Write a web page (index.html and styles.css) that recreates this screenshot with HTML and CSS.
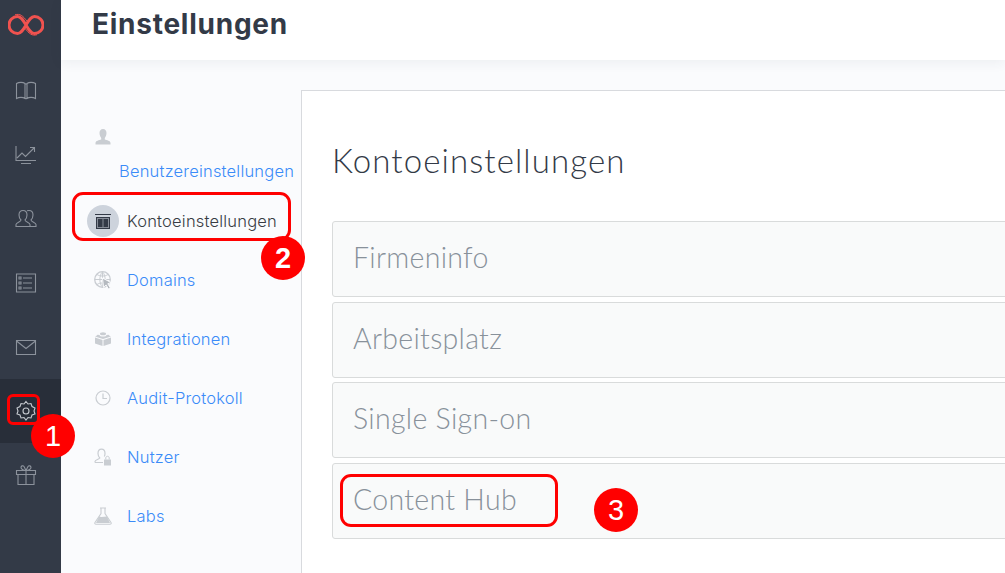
FILE: index.html
```html
<!DOCTYPE html>
<html lang="de">
<head>
<meta charset="utf-8">
<title>Einstellungen</title>
<link rel="stylesheet" href="styles.css">
</head>
<body>
<div class="app">
  <aside class="rail">
    <div class="logo">
      <svg width="36" height="23" viewBox="0 0 36 23" fill="none" stroke="#f0524f" stroke-width="3"><path d="M18 12C15 7 13 3.500 9.500 3.500a8 8 0 0 0 0 17c3.500 0 5.500-3.500 8.500-8.500s5-8.500 8.500-8.500a8 8 0 0 1 0 17c-3.500 0-5.500-3.500-8.500-8.500z"/><path stroke-width="1" d="M7 1.800c5-1.500 8 1 12 6.500M29 21.700c-5 1.500-8-1-12-6.500"/></svg>
    </div>
    <div class="rail-item"><svg class="ri" viewBox="0 0 22 20"><path d="M1.500 2.500C4 1 8 1 10 2.500v15C8 16 4 16 1.500 17.500zM20.500 2.500C18 1 14 1 12 2.500v15c2-1.500 6-1.500 8.500 0zM10 3h2M10 17.500h2"/></svg></div>
    <div class="rail-item"><svg class="ri" viewBox="0 0 22 20"><path d="M1 1v14.500h20M6 18.500h10M2 13l5-5 3.500 3.500L19 3M15 2.500h4.500V7"/></svg></div>
    <div class="rail-item"><svg class="ri" viewBox="0 0 22 20"><path d="M1 17.500v-2c0-2 5-2.500 5-4.500C4.500 9.500 4 7.500 4 6c0-3 1.500-4.500 4-4.500S12 3 12 6c0 1.500-.5 3.500-2 5 0 2 5 2.500 5 4.500v2zM12 1.800c.8-.3 1.500-.3 2-.3 2.500 0 4 1.500 4 4.500 0 1.500-.5 3.500-2 5 0 2 5 2.500 5 4.500v2h-6"/></svg></div>
    <div class="rail-item"><svg class="ri" viewBox="0 0 22 20"><path d="M1.500 1h19v18h-19zM8 5h9M8 10h9M8 15h9M4 4h2v2H4zM4 9h2v2H4zM4 14h2v2H4z"/></svg></div>
    <div class="rail-item"><svg class="ri" viewBox="0 0 22 20"><path d="M1.500 3.500h19v14h-19zM1.500 4l9.500 7.500L20.500 4"/></svg></div>
    <div class="rail-item active"><svg class="ri" viewBox="0 0 22 22"><path d="M11 1.500l2 2.500 3-.5 1 3 3 1.500-1 3 1 3-3 1-1 3-3-.5-2 2.500-2-2.500-3 .5-1-3-3-1 1-3-1-3 3-1.500 1-3 3 .5z"/><circle cx="11" cy="11" r="3"/></svg></div>
    <div class="rail-item"><svg class="ri" viewBox="0 0 22 22"><path d="M1.500 6.500h19v4h-19zM3 10.500h16v10H3zM11 6.500v14M11 6.500C8 6.500 6 5 6 3.500S8 1 9 2.500zM11 6.500c3 0 5-1.500 5-3S14 1 13 2.500z"/></svg></div>
  </aside>
  <div class="main">
    <header class="topbar"><h1 class="page-title">Einstellungen</h1></header>
    <div class="body">
      <nav class="nav">
        <a class="nav-stack">
          <svg class="ni" viewBox="0 0 18 18"><path class="solid" d="M9 1c2.300 0 3.500 1.800 3.500 4S11.500 9 10.800 10v1.500c2 .6 5.700 1.300 5.700 3.500v1.500h-15V15c0-2.200 3.700-2.900 5.700-3.500V10C6.500 9 5.500 7.200 5.500 5S6.700 1 9 1z"/></svg>
          <span class="nav-text stack-text">Benutzereinstellungen</span>
        </a>
        <a class="nav-row current">
          <span class="badge"><svg width="16" height="15" viewBox="0 0 16 15"><path fill="#333a47" d="M0 0h16v1H0zM1 3h14v12H1z"/><path fill="#cdd3dc" opacity=".55" d="M2 4h12v10H2z"/><path fill="#333a47" d="M3 5h4.500v8H3zM8.500 5H13v8H8.500z"/></svg></span>
          <span class="nav-text">Kontoeinstellungen</span>
        </a>
        <a class="nav-row">
          <svg class="ni" viewBox="0 0 18 18"><circle cx="8.500" cy="8.500" r="7.800" fill="none" stroke="#c9cdd2" stroke-width="1.300"/><path fill="none" stroke="#c9cdd2" d="M1 8.500h15M8.500 1v15M3 3.500c3 2 8 2 11 0M3 13.500c3-2 8-2 11 0M8.500 1C5 4 5 13 8.500 16M8.500 1c3.500 3 3.500 12 0 15"/><path fill="#b4b9bf" stroke="#fafbfd" d="M8.500 7l8.500 4.500-3.200 1.200 2.500 4-2 1.200-2.300-4-2.500 2.500z"/></svg>
          <span class="nav-text">Domains</span>
        </a>
        <a class="nav-row">
          <svg class="ni" viewBox="0 0 18 18"><path class="solid" d="M9 9L1 6.500 5.500 5c0 1 1.700 1.600 3.500 1.600s3.500-.6 3.500-1.600L17 6.500zM1 7.500l7.500 2.500v6L1 13.500zM17 7.500L9.500 10v6l7.500-2.500z"/><ellipse class="solid" cx="9" cy="3.800" rx="3" ry="1.500"/><ellipse class="solid" cx="4" cy="5.500" rx="1.500" ry=".8"/><ellipse class="solid" cx="14" cy="5.500" rx="1.500" ry=".8"/></svg>
          <span class="nav-text">Integrationen</span>
        </a>
        <a class="nav-row">
          <svg class="ni" viewBox="0 0 18 18"><circle cx="9" cy="9" r="7" fill="none" stroke="#c9cdd2" stroke-width="1.200"/><path fill="none" stroke="#c9cdd2" stroke-width="1.200" d="M9 4.500V9.500H13"/></svg>
          <span class="nav-text">Audit-Protokoll</span>
        </a>
        <a class="nav-row">
          <svg class="ni" viewBox="0 0 18 18"><path fill="none" stroke="#c9cdd2" stroke-width="1.200" d="M1 14.500v-1c0-1.500 4-2.200 4.800-3.500C4.500 8.700 4 7 4 5.500 4 3 5.300 1.200 7.500 1.200S11 3 11 5.500c0 1-.2 2-.7 3M1 14.500h8"/><path class="solid" d="M10 11.500h7V17.500h-7z"/><path fill="none" stroke="#c9cdd2" d="M11.800 11.500V10c0-2.300 3.400-2.300 3.400 0v1.500"/></svg>
          <span class="nav-text">Nutzer</span>
        </a>
        <a class="nav-row">
          <svg class="ni" viewBox="0 0 18 18"><path fill="none" stroke="#c9cdd2" stroke-width="1.100" d="M6 1h6M7 1v5.500L1 15.500c-.5 1 0 1.800 1 1.800h14c1 0 1.500-.8 1-1.800L11 6.500V1"/><path class="solid" d="M5 9.500c2 1 5 0 8 0l3 6.500H2z"/></svg>
          <span class="nav-text">Labs</span>
        </a>
      </nav>
      <section class="panel">
        <h2 class="panel-title">Kontoeinstellungen</h2>
        <div class="accordion">
          <div class="acc-item">Firmeninfo</div>
          <div class="acc-item">Arbeitsplatz</div>
          <div class="acc-item">Single Sign-on</div>
          <div class="acc-item">Content Hub</div>
        </div>
      </section>
    </div>
  </div>
</div>
<div class="mark mark-1"></div>
<div class="mark mark-2"></div>
<div class="mark mark-3"></div>
<div class="num num-1">1</div>
<div class="num num-2">2</div>
<div class="num num-3">3</div>
</body>
</html>
```

FILE: styles.css
```css
html, body { margin: 0; padding: 0; width: 1005px; height: 573px; overflow: hidden; }
body { position: relative; font-family: "Lato", "Open Sans", sans-serif; background: #fff; }
.app { display: flex; height: 573px; }

.rail { width: 61px; flex: none; background: #333a47; display: flex; flex-direction: column; }
.logo { height: 59px; display: flex; align-items: flex-start; justify-content: center; padding-right: 9px; box-sizing: border-box; padding-top: 13px; }
.rail-item { height: 64px; display: flex; align-items: center; justify-content: center; padding-right: 9px; box-sizing: border-box; }
.rail-item.active { background: #282e39; }
.ri { width: 22px; height: 22px; fill: none; stroke: #8c929c; stroke-width: 1.100; }
.active .ri { stroke: #c5c9cf; }

.main { flex: 1; min-width: 0; display: flex; flex-direction: column; background: #fafbfd; }
.topbar { height: 60px; flex: none; background: #fff; box-shadow: 0 2px 12px rgba(40, 50, 70, .07); position: relative; display: flex; align-items: flex-start; padding-left: 31px; }
.page-title { margin: 0; padding-top: 7px; font-family: "Inter", "Lato", sans-serif; font-size: 28px; line-height: 34px; font-weight: 700; color: #333a47; letter-spacing: .75px; }

.body { flex: 1; display: flex; min-height: 0; padding-top: 30px; }
.nav { width: 240px; flex: none; display: flex; flex-direction: column; box-sizing: border-box; padding-left: 30px; }
.nav-stack { display: flex; flex-direction: column; height: 101.500px; padding-top: 38px; box-sizing: border-box; }
.nav-row { height: 59px; display: flex; align-items: center; flex: none; }
.ni { width: 18px; height: 18px; flex: none; margin-left: 3px; margin-right: 15px; }
.solid { fill: #c9cdd2; }
.nav-text { font-family: "Inter", "Lato", sans-serif; font-size: 16.500px; font-weight: 300; color: #3a8bf8; white-space: nowrap; letter-spacing: .2px; }
.stack-text { margin-top: 15px; margin-left: 28px; }
.current .nav-text { color: #383c44; }
.badge { width: 32px; height: 32px; margin-left: -4px; margin-right: 8px; border-radius: 50%; background: #cdd3dc; display: flex; align-items: center; justify-content: center; flex: none; }

.panel { flex: 1; background: #fff; border-left: 1px solid #d8dade; border-top: 1px solid #d8dade; padding: 0 0 0 30px; min-width: 0; }
.panel-title { margin: 47px 0 39px; font-size: 33px; line-height: 44px; font-weight: 300; color: #333a47; letter-spacing: 1.100px; }
.accordion { display: flex; flex-direction: column; gap: 4.670px; margin-right: -10px; }
.acc-item { height: 76px; box-sizing: border-box; background: #f9fafa; border: 1px solid #d9dbdb; border-radius: 3px; padding-left: 20px; font-size: 28.500px; line-height: 71px; font-weight: 300; color: #88919a; letter-spacing: .3px; }

.mark { position: absolute; border: 3px solid #f00; box-sizing: border-box; }
.mark-1 { left: 7px; top: 394px; width: 33px; height: 31px; border-radius: 6px; }
.mark-2 { left: 72px; top: 192px; width: 219px; height: 49px; border-radius: 11px; }
.mark-3 { left: 340px; top: 474px; width: 218px; height: 53px; border-radius: 11px; }
.num { position: absolute; width: 44px; height: 44px; border-radius: 50%; background: #f00; color: #fff; font-family: "Liberation Sans", sans-serif; font-size: 29px; line-height: 44px; text-align: center; }
.num-1 { left: 31px; top: 414px; }
.num-2 { left: 261px; top: 236px; font-weight: 700; }
.num-3 { left: 594px; top: 488px; }
```
